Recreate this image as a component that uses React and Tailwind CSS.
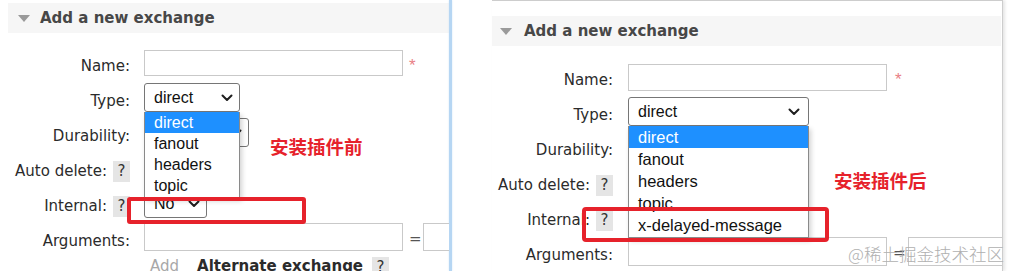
import React from 'react';

const sans = "font-['DejaVu_Sans',sans-serif]";
const arial = "font-['Liberation_Sans',Arial,sans-serif]";
const cjk = "font-['Noto_Sans_CJK_SC',sans-serif]";

const Chevron = () => (
    <svg width="12" height="8" viewBox="0 0 12 8" className="shrink-0">
        <path d="M1.5 1.5 L6 6 L10.5 1.5" fill="none" stroke="#1f1f1f" strokeWidth="2" strokeLinecap="round" strokeLinejoin="round" />
    </svg>
);

const Help = () => (
    <span className="ml-[6px] mt-[8px] w-[17px] h-[21px] bg-[#e5e5e5] flex items-center justify-center leading-none text-[#333]">?</span>
);

const Header = ({ barCls, triCls }) => (
    <div className={`${barCls} h-[30px] bg-[#f6f6f6] flex items-center`}>
        <svg width="12" height="7" viewBox="0 0 12 7" className={triCls}>
            <polygon points="0,0 12,0 6,7" fill="#9a9a9a" />
        </svg>
        <span className={`${sans} text-[15px] font-bold text-[#474747] leading-none`}>Add a new exchange</span>
    </div>
);

const Row = ({ labelW, gapCls, label, help, h = 'h-[35px]', children }) => (
    <div className={`flex ${h} ${gapCls}`}>
        <div className={`${labelW} shrink-0 flex justify-end items-start`}>
            <span className="pt-[8px] leading-[20px] whitespace-nowrap">{label}</span>
            {help && <Help />}
        </div>
        <div className="relative flex items-start">{children}</div>
    </div>
);

const Select = ({ wCls, mtCls = '', pr = 'pr-[6px]', text, children }) => (
    <div className={`relative ${mtCls}`}>
        <div className={`${wCls} h-[29px] border border-[#767676] rounded-[3px] bg-white flex items-center justify-between pl-[9px] ${pr} ${arial} text-[16px] text-[#111]`}>
            <span>{text}</span>
            <Chevron />
        </div>
        {children}
    </div>
);

const Options = ({ items, itemH, textCls }) => (
    <div className={`absolute left-0 top-[29px] w-full z-10 bg-white border border-[#8a8a8a] border-t-0 shadow-[2px_3px_5px_rgba(0,0,0,0.18)] pb-[1px] ${arial} ${textCls} text-[#111]`}>
        {items.map((o, i) => (
            <div
                key={o}
                className={`${itemH} pl-[9px] flex items-center leading-none ${i === 0 ? 'bg-[#1e90ff] text-white' : ''}`}
            >
                {o}
            </div>
        ))}
    </div>
);

const Input = ({ wCls, hCls = 'h-[27px]', mtCls = '' }) => (
    <div className={`${wCls} ${hCls} ${mtCls} border border-[#c9c9c9] bg-white shrink-0`}></div>
);

const Star = ({ mlCls }) => (
    <span className={`${mlCls} mt-[9px] text-[17px] leading-none text-[#e97f86] ${arial}`}>*</span>
);

export default function App() {
    const base = ['direct', 'fanout', 'headers', 'topic'];

    return (
        <div className={`relative w-[1015px] h-[271px] bg-white overflow-hidden flex ${sans} text-[15px] text-[#2b2b2b]`}>
            {/* before plugin */}
            <div className="w-[449px] h-full shrink-0 overflow-hidden">
                <div className="pt-[3px] pl-[8px]">
                    <Header barCls="w-[441px]" triCls="ml-[10px] mr-[10px]" />
                </div>
                <div className="mt-[15px]">
                    <Row labelW="w-[130px]" gapCls="gap-[14px]" label="Name:">
                        <Input wCls="w-[259px]" hCls="h-[26px]" mtCls="mt-[2px]" />
                        <Star mlCls="ml-[6px]" />
                    </Row>
                    <Row labelW="w-[130px]" gapCls="gap-[14px]" label="Type:">
                        <Select wCls="w-[96px]" text="direct">
                            <Options items={base} itemH="h-[21px]" textCls="text-[16px]" />
                        </Select>
                    </Row>
                    <Row labelW="w-[130px]" gapCls="gap-[14px]" label="Durability:">
                        <Select wCls="w-[105px]" text="Durable" />
                    </Row>
                    <Row labelW="w-[130px]" gapCls="gap-[14px]" label="Auto delete:" help>
                        <Select wCls="w-[63px]" mtCls="mt-[4px]" text="No" />
                    </Row>
                    <Row labelW="w-[130px]" gapCls="gap-[14px]" label="Internal:" help>
                        <Select wCls="w-[63px]" mtCls="mt-[1px]" text="No" />
                    </Row>
                    <Row labelW="w-[130px]" gapCls="gap-[14px]" label="Arguments:" h="h-[33px]">
                        <Input wCls="w-[259px]" hCls="h-[28px]" />
                        <span className="ml-[6px] mr-[1px] mt-[5px] text-[#555]">=</span>
                        <Input wCls="w-[60px]" hCls="h-[28px]" />
                    </Row>
                    <div className="flex pl-[150px] items-start">
                        <span className="text-[#a8a8a8] leading-[20px]">Add</span>
                        <span className="ml-[18px] font-bold text-[#2b2b2b] leading-[20px]">Alternate exchange</span>
                        <span className="ml-[9px] mt-[1px] w-[17px] h-[21px] bg-[#e5e5e5] flex items-center justify-center leading-none text-[#333]">?</span>
                    </div>
                </div>
            </div>

            <div className="w-[3px] h-full shrink-0 bg-[#b6d6f3] shadow-[0_0_2px_#cfe4f8]"></div>

            {/* after plugin */}
            <div className="ml-[40px] w-[511px] h-full shrink-0 border-t border-r border-[#cdcdcd] shadow-[2px_0_3px_rgba(0,0,0,0.1)] overflow-hidden">
                <div className="pt-[15px]">
                    <Header barCls="w-[509px]" triCls="ml-[8px] mr-[12px]" />
                </div>
                <div className="mt-[16px]">
                    <Row labelW="w-[121px]" gapCls="gap-[15px]" label="Name:">
                        <Input wCls="w-[259px]" mtCls="mt-[2px]" />
                        <Star mlCls="ml-[8px]" />
                    </Row>
                    <Row labelW="w-[121px]" gapCls="gap-[15px]" label="Type:">
                        <Select wCls="w-[181px]" pr="pr-[8px]" text="direct">
                            <Options items={[...base, 'x-delayed-message']} itemH="h-[22px]" textCls="text-[16.5px]" />
                        </Select>
                    </Row>
                    <Row labelW="w-[121px]" gapCls="gap-[15px]" label="Durability:">
                        <Select wCls="w-[105px]" text="Durable" />
                    </Row>
                    <Row labelW="w-[121px]" gapCls="gap-[15px]" label="Auto delete:" help>
                        <Select wCls="w-[63px]" mtCls="mt-[4px]" text="No" />
                    </Row>
                    <Row labelW="w-[121px]" gapCls="gap-[15px]" label="Internal:" help>
                        <Select wCls="w-[63px]" mtCls="mt-[1px]" text="No" />
                    </Row>
                    <Row labelW="w-[121px]" gapCls="gap-[15px]" label="Arguments:">
                        <Input wCls="w-[259px]" hCls="h-[29px]" />
                        <span className="ml-[6px] mr-[2px] mt-[5px] text-[#555]">=</span>
                        <Input wCls="w-[100px]" hCls="h-[29px]" />
                    </Row>
                </div>
            </div>

            {/* annotations */}
            <div className="absolute left-[127px] top-[197px] w-[179px] h-[27px] border-[4px] border-[#e6222b] rounded-[3px] z-20"></div>
            <div className="absolute left-[582px] top-[207px] w-[247px] h-[35px] border-[4px] border-[#e6222b] rounded-[4px] z-20"></div>
            <span className={`absolute left-[270px] top-[137px] ${cjk} text-[18.5px] font-bold leading-none text-[#e6222b] z-20`}>安装插件前</span>
            <span className={`absolute left-[834px] top-[171px] ${cjk} text-[18.5px] font-bold leading-none text-[#e6222b] z-20`}>安装插件后</span>
            <span className={`absolute left-[848px] top-[245px] ${cjk} text-[17.5px] font-light leading-none text-[#b0b0b0] z-20`}>@稀土掘金技术社区</span>
        </div>
    );
}
